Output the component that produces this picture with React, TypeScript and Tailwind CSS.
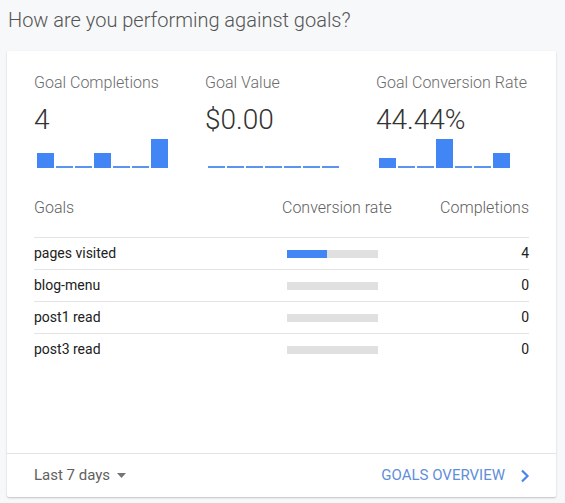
import React from "react";

const font = { fontFamily: "Roboto, 'Noto Sans', Arial, sans-serif" };

// sparkline values are 0..1 of the tallest bar (29px)
const metrics = [
  { label: "Goal Completions", value: "4", bars: [0.5, 0, 0, 0.5, 0, 0, 1] },
  { label: "Goal Value", value: "$0.00", bars: [0, 0, 0, 0, 0, 0, 0] },
  { label: "Goal Conversion Rate", value: "44.44%", bars: [0.34, 0, 0, 1, 0, 0, 0.5] },
];

const goals = [
  { name: "pages visited", rate: 44.44, count: 4 },
  { name: "blog-menu", rate: 0, count: 0 },
  { name: "post1 read", rate: 0, count: 0 },
  { name: "post3 read", rate: 0, count: 0 },
];

function Sparkline({ bars }: { bars: number[] }) {
  return (
    <div className="ml-[3px] flex h-[29px] items-end gap-[2px]">
      {bars.map((b, i) =>
        b > 0 ? (
          <div key={i} className="w-[17px] bg-[#4285f4]" style={{ height: Math.round(b * 29) }} />
        ) : (
          <div key={i} className="h-[2px] w-[17px] bg-[#5b93f2]" />
        )
      )}
    </div>
  );
}

export default function App() {
  return (
    <div className="h-[503px] w-[565px] bg-[#f7f8f9] pt-[8px]" style={font}>
      <h2 className="ml-[8px] text-[20px] leading-[24px] font-light text-[#545454]">
        How are you performing against goals?
      </h2>

      <div className="mt-[19px] ml-[7px] flex h-[446px] w-[549px] flex-col rounded-[2px] bg-white shadow-[0_1px_2px_rgba(0,0,0,0.22)]">
        <div className="px-[27px] pt-[22px]">
          {/* metrics */}
          <div className="grid grid-cols-[171px_171px_1fr]">
            {metrics.map((m) => (
              <div key={m.label}>
                <div className="text-[16px] leading-[20px] font-light text-[#6b6b6b]">{m.label}</div>
                <div className="mt-[10px] text-[28px] leading-[34px] font-light text-[#333]">{m.value}</div>
                <div className="mt-[2px]">
                  <Sparkline bars={m.bars} />
                </div>
              </div>
            ))}
          </div>

          {/* goals table */}
          <div className="mt-[30px] grid grid-cols-[248px_109px_1fr] pb-[19px] text-[16px] leading-[20px] font-light whitespace-nowrap text-[#616161]">
            <div>Goals</div>
            <div>Conversion rate</div>
            <div className="text-right">Completions</div>
          </div>
          {goals.map((g) => (
            <div
              key={g.name}
              className="grid h-[32px] grid-cols-[248px_109px_1fr] items-center border-t border-[#e4e4e4] text-[14px] text-[#212121]"
            >
              <div>{g.name}</div>
              <div className="ml-[5px] h-[8px] w-[91px] bg-[#e0e0e0]">
                <div className="h-full bg-[#4285f4]" style={{ width: `${g.rate}%` }} />
              </div>
              <div className="text-right">{g.count}</div>
            </div>
          ))}
        </div>

        {/* footer */}
        <div className="mt-auto flex h-[44px] items-center justify-between border-t border-[#e4e4e4] pr-[27px] pl-[27px]">
          <div className="flex items-center gap-[7px] text-[15px] text-[#616161]">
            Last 7 days
            <svg width="9" height="5" viewBox="0 0 9 5">
              <path d="M0 0h9L4.5 5z" fill="#757575" />
            </svg>
          </div>
          <div className="flex items-center gap-[15px] text-[15px] text-[#5f8fd9]">
            GOALS OVERVIEW
            <svg width="10" height="14" viewBox="0 0 10 14" className="-mr-[1px]">
              <path d="M2 1.5l5.5 5.5L2 12.5" fill="none" stroke="#4a86e8" strokeWidth="2.2" />
            </svg>
          </div>
        </div>
      </div>
    </div>
  );
}
